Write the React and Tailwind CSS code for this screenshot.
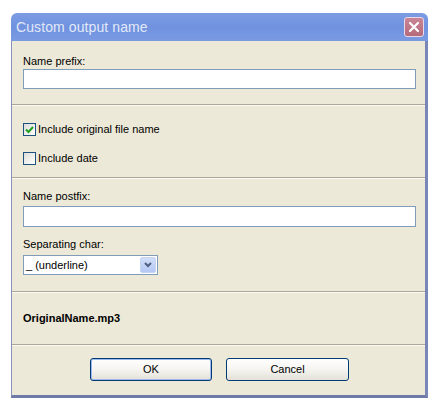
import React from 'react';

const font = { fontFamily: '"Liberation Sans", Arial, sans-serif' };

function Separator() {
  return <div className="h-px bg-[#aca899] shadow-[0_1px_0_#fbfaf5]" />;
}

function TextBox({ h = 'h-[20px]' }) {
  return <div className={`${h} w-[393px] bg-white border border-[#7f9db9]`} />;
}

function Checkbox({ checked, label }) {
  return (
    <div className="flex items-center gap-[2px] h-[13px]">
      <div className="w-[13px] h-[13px] border border-[#1c5180] bg-gradient-to-br from-[#dcdcd7] to-[#ffffff] flex items-center justify-center">
        {checked && (
          <svg width="9" height="9" viewBox="0 0 9 9">
            <path d="M1 4.5 L3.5 7 L8 2" fill="none" stroke="#21a121" strokeWidth="2" />
          </svg>
        )}
      </div>
      <span className="text-[11px] leading-[13px] text-black">{label}</span>
    </div>
  );
}

function Button({ children, isDefault }) {
  return (
    <div
      className={`h-[23px] flex items-center justify-center rounded-[3px] border border-[#003c74] bg-gradient-to-b from-[#ffffff] via-[#f5f4f0] to-[#e3e1d8] text-[11px] text-black ${
        isDefault ? 'w-[122px] shadow-[inset_0_0_0_1px_#9cb8ec]' : 'w-[123px]'
      }`}
    >
      {children}
    </div>
  );
}

export default function App() {
  return (
    <div className="w-[434px] h-[402px] bg-white pt-[13px] pl-[11px]" style={font}>
      <div className="w-[417px] h-[385px] flex flex-col">
        {/* Title bar */}
        <div className="h-[28px] shrink-0 rounded-t-[6px] bg-gradient-to-b from-[#7c9be3] via-[#7092df] to-[#7a9ae2] flex items-center justify-between pl-[5px] pr-[4px]">
          <span className="text-[14px] text-[#e2e9f8] tracking-[0.1px]">Custom output name</span>
          <div className="w-[20px] h-[20px] rounded-[3px] border border-[#e8d8e8] bg-gradient-to-b from-[#c98595] to-[#b56a7c] flex items-center justify-center">
            <svg width="12" height="12" viewBox="0 0 12 12">
              <path d="M2 2 L10 10 M10 2 L2 10" stroke="#ffffff" strokeWidth="2.2" strokeLinecap="round" />
            </svg>
          </div>
        </div>

        {/* Body */}
        <div className="flex-1 flex flex-col bg-[#ece9d8] border-l border-l-[#8a93bc] border-r-[3px] border-r-[#7b86b8] border-b-[3px] border-b-[#6f79a8]">
          <div className="h-[63px] px-[11px] pt-[14px]">
            <div className="text-[11px] leading-[13px] text-black">Name prefix:</div>
            <div className="mt-[1px]">
              <TextBox />
            </div>
          </div>
          <Separator />
          <div className="h-[72px] px-[11px] pt-[18px] flex flex-col gap-[16px]">
            <Checkbox checked label="Include original file name" />
            <Checkbox label="Include date" />
          </div>
          <Separator />
          <div className="h-[113px] px-[11px] pt-[12px]">
            <div className="text-[11px] leading-[13px] text-black">Name postfix:</div>
            <div className="mt-[3px]">
              <TextBox h="h-[21px]" />
            </div>
            <div className="text-[11px] leading-[13px] text-black mt-[11px]">Separating char:</div>
            <div className="mt-[4px] w-[135px] h-[20px] bg-white border border-[#7f9db9] flex items-center justify-between pl-[2px] pr-[1px]">
              <span className="text-[11px] text-black">_ (underline)</span>
              <div className="w-[16px] h-[16px] rounded-[2px] bg-gradient-to-b from-[#d2def8] to-[#b4c8f4] border border-[#c6d4f4] flex items-center justify-center">
                <svg width="8" height="6" viewBox="0 0 8 6">
                  <path d="M1 1 L4 4 L7 1" fill="none" stroke="#4d6185" strokeWidth="2" />
                </svg>
              </div>
            </div>
          </div>
          <Separator />
          <div className="h-[52px] px-[11px] flex items-center">
            <span className="text-[11px] font-bold text-black">OriginalName.mp3</span>
          </div>
          <Separator />
          <div className="flex-1 flex items-start justify-center gap-[14px] pt-[13px] pl-[2px]">
            <Button isDefault>OK</Button>
            <Button>Cancel</Button>
          </div>
        </div>
      </div>
    </div>
  );
}
